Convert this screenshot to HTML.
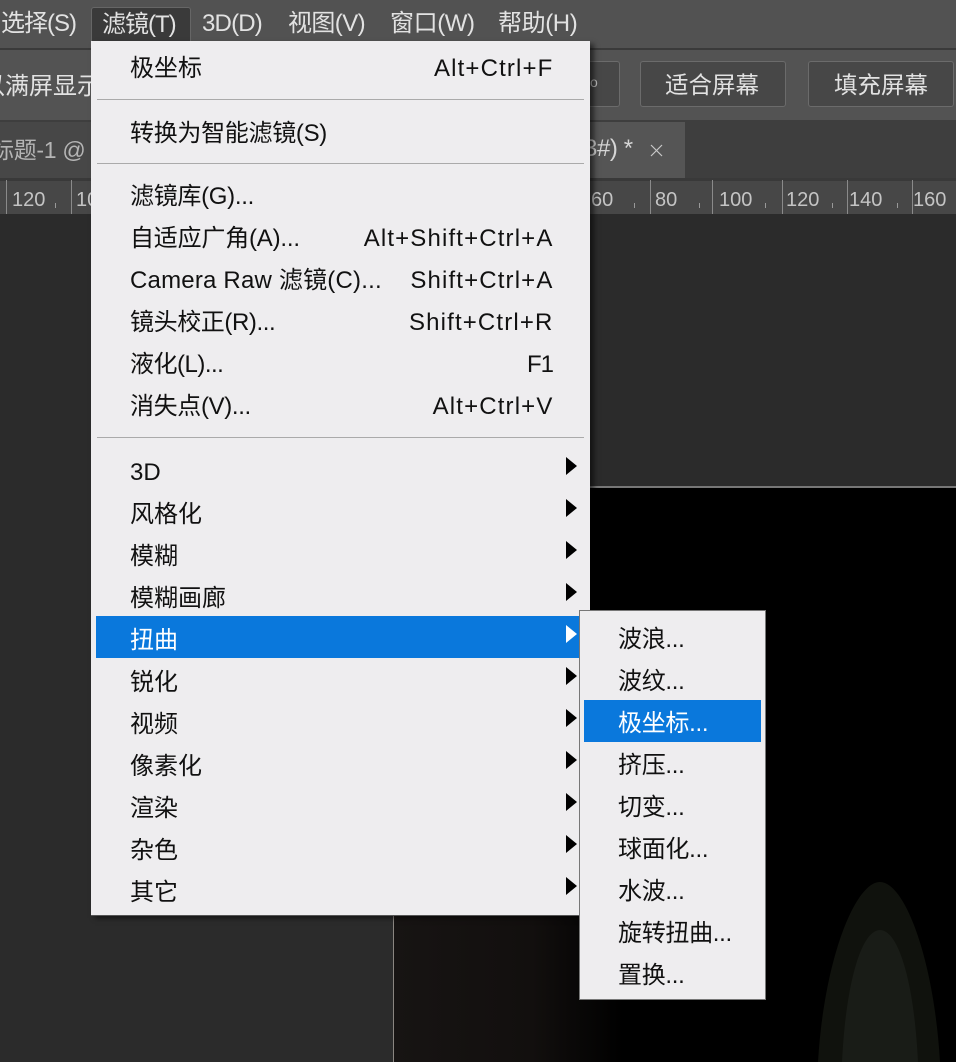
<!DOCTYPE html>
<html lang="zh"><head><meta charset="utf-8"><style>
html,body{margin:0;padding:0;background:#2b2b2b;width:956px;height:1062px;overflow:hidden}
#p{position:relative;width:956px;height:1062px;overflow:hidden;background:#2b2b2b;font-family:"Liberation Sans","Noto Sans CJK SC",sans-serif}
#p div{position:absolute}
.t{white-space:nowrap;font-size:24px;line-height:30px;color:#111;margin-top:2px}
.l{color:#e2e2e2;margin-top:1px}
.r{white-space:nowrap;font-size:20px;line-height:24px;color:#c4c4c4;top:188px}
.a{width:0;height:0;border-left:11px solid #000;border-top:9.5px solid transparent;border-bottom:9.5px solid transparent;left:566px}
.k{letter-spacing:1.15px;text-align:right;right:402.5px}
.s{letter-spacing:-.3px}
.tick{width:1px;height:34px;top:180px;background:#8a8a8a}
.m{width:1px;height:5px;top:203px;background:#999}
.sep{left:97px;width:487px;height:1px;background:#aaa}
.b{height:44px;border:1px solid #6b6b6b;border-radius:3px;background:#474747;top:61px}
</style></head><body><div id="p">
<div style="left:0;top:0;width:956px;height:48px;background:#525252"></div>
<div style="left:0;top:48px;width:956px;height:2px;background:#3a3a3a"></div>
<div style="left:0;top:50px;width:956px;height:70px;background:#535353"></div>
<div style="left:0;top:120px;width:956px;height:58px;background:#3e3e3e"></div>
<div style="left:0;top:122px;width:374px;height:56px;background:#474747"></div>
<div style="left:374px;top:122px;width:311px;height:56px;background:#555"></div>
<div style="left:0;top:178px;width:956px;height:3px;background:#393939"></div>
<div style="left:0;top:181px;width:956px;height:33px;background:#474747"></div>
<div class="t l" style="left:1px;top:8px;letter-spacing:-1px">选择(S)</div>
<div style="left:91px;top:7px;width:98px;height:34px;background:#3a3a3a;border:1px solid #666;border-bottom:0;border-radius:3px 3px 0 0"></div>
<div class="t l" style="left:102px;top:9px;letter-spacing:-1px">滤镜(T)</div>
<div class="t l" style="left:202px;top:8px;letter-spacing:-.8px">3D(D)</div>
<div class="t l" style="left:288px;top:8px;letter-spacing:-.6px">视图(V)</div>
<div class="t l" style="left:390px;top:8px;letter-spacing:-.4px">窗口(W)</div>
<div class="t l" style="left:498px;top:8px;letter-spacing:-.4px">帮助(H)</div>
<div class="t l" style="left:-19px;top:71px">以满屏显示</div>
<div class="b" style="left:560px;width:58px"></div>
<div class="b" style="left:640px;width:144px"></div>
<div class="b" style="left:808px;width:144px"></div>
<div class="t l" style="left:590px;top:66px;font-size:14px;color:#bbb">o</div>
<div class="t l" style="left:665px;top:69px;font-size:23.5px">适合屏幕</div>
<div class="t l" style="left:834px;top:69px;font-size:23.5px">填充屏幕</div>
<div class="t" style="left:-9px;top:133px;color:#b5b5b5;font-size:23px;margin-top:2px;letter-spacing:-.3px">标题-1 @</div>
<div class="t" style="left:584px;top:132px;color:#d5d5d5;letter-spacing:-.4px">3#) *</div>
<svg style="position:absolute;left:650px;top:144px" width="13" height="13"><path d="M1 1L12 12M12 1L1 12" stroke="#c8c8c8" stroke-width="1.2" fill="none"/></svg>
<div class="tick" style="left:6px"></div><div class="tick" style="left:71px"></div>
<div class="tick" style="left:650px"></div><div class="tick" style="left:712px"></div><div class="tick" style="left:782px"></div><div class="tick" style="left:847px"></div><div class="tick" style="left:912px"></div>
<div class="m" style="left:55px"></div><div class="m" style="left:634px"></div><div class="m" style="left:699px"></div><div class="m" style="left:765px"></div><div class="m" style="left:832px"></div><div class="m" style="left:897px"></div>
<div class="r" style="left:12px">120</div><div class="r" style="left:76px">10</div>
<div class="r" style="left:591px">60</div><div class="r" style="left:655px">80</div><div class="r" style="left:719px">100</div><div class="r" style="left:786px">120</div><div class="r" style="left:849px">140</div><div class="r" style="left:913px">160</div>
<div style="left:393px;top:487px;width:563px;height:575px;background:#000"></div>
<div style="left:394px;top:915px;width:230px;height:147px;background:linear-gradient(90deg,#171413,#120f0e 60%,#000)"></div>
<div style="left:590px;top:486px;width:366px;height:2px;background:#777"></div>
<div style="left:393px;top:915px;width:1px;height:147px;background:#8a8580"></div>
<svg style="position:absolute;left:800px;top:870px" width="156" height="192"><path d="M18 192C24 90 55 12 80 12C105 12 134 90 140 192Z" fill="#10120d"/><path d="M42 192C46 110 62 60 80 60C98 60 114 110 118 192Z" fill="#191c17"/></svg>
<div style="left:91px;top:41px;width:499px;height:874px;background:#eeedef;box-shadow:0 1px 0 #555,4px 3px 5px rgba(0,0,0,.55)"></div>
<div class="sep" style="top:99px"></div>
<div class="sep" style="top:163px"></div>
<div class="sep" style="top:437px"></div>
<div style="left:96px;top:616px;width:484px;height:42px;background:#0a78dc"></div>
<div class="t" style="left:130px;top:52px">极坐标</div>
<div class="t k" style="top:52px">Alt+Ctrl+F</div>
<div class="t" style="left:130px;top:117px;letter-spacing:-.3px">转换为智能滤镜(S)</div>
<div class="t" style="left:130px;top:180px;letter-spacing:-.3px">滤镜库(G)...</div>
<div class="t" style="left:130px;top:222px;letter-spacing:-.2px">自适应广角(A)...</div>
<div class="t k" style="top:222px">Alt+Shift+Ctrl+A</div>
<div class="t" style="left:130px;top:264px;letter-spacing:.2px">Camera Raw 滤镜(C)...</div>
<div class="t k" style="top:264px">Shift+Ctrl+A</div>
<div class="t" style="left:130px;top:306px;letter-spacing:-.4px">镜头校正(R)...</div>
<div class="t k" style="top:306px">Shift+Ctrl+R</div>
<div class="t" style="left:130px;top:348px;letter-spacing:-.5px">液化(L)...</div>
<div class="t" style="left:527px;top:348px;letter-spacing:-1px">F1</div>
<div class="t" style="left:130px;top:390px;letter-spacing:-.35px">消失点(V)...</div>
<div class="t k" style="top:390px">Alt+Ctrl+V</div>
<div class="t" style="left:130px;top:456px">3D</div>
<div class="t" style="left:130px;top:498px">风格化</div>
<div class="t" style="left:130px;top:540px">模糊</div>
<div class="t" style="left:130px;top:582px">模糊画廊</div>
<div class="t" style="left:130px;top:624px;color:#fff">扭曲</div>
<div class="t" style="left:130px;top:666px">锐化</div>
<div class="t" style="left:130px;top:708px">视频</div>
<div class="t" style="left:130px;top:750px">像素化</div>
<div class="t" style="left:130px;top:792px">渲染</div>
<div class="t" style="left:130px;top:834px">杂色</div>
<div class="t" style="left:130px;top:876px">其它</div>
<div class="a" style="top:457px"></div><div class="a" style="top:499px"></div><div class="a" style="top:541px"></div><div class="a" style="top:583px"></div>
<div class="a" style="top:625px;border-left-color:#fff"></div>
<div class="a" style="top:667px"></div><div class="a" style="top:709px"></div><div class="a" style="top:751px"></div><div class="a" style="top:793px"></div><div class="a" style="top:835px"></div><div class="a" style="top:877px"></div>
<div style="left:579px;top:610px;width:185px;height:388px;background:#eeedef;border:1px solid #777"></div>
<div style="left:584px;top:700px;width:177px;height:42px;background:#0a78dc"></div>
<div class="t s" style="left:618px;top:623px">波浪...</div>
<div class="t s" style="left:618px;top:665px">波纹...</div>
<div class="t s" style="left:618px;top:707px;color:#fff">极坐标...</div>
<div class="t s" style="left:618px;top:749px">挤压...</div>
<div class="t s" style="left:618px;top:791px">切变...</div>
<div class="t s" style="left:618px;top:833px">球面化...</div>
<div class="t s" style="left:618px;top:875px">水波...</div>
<div class="t s" style="left:618px;top:917px">旋转扭曲...</div>
<div class="t s" style="left:618px;top:959px">置换...</div>
</div></body></html>
